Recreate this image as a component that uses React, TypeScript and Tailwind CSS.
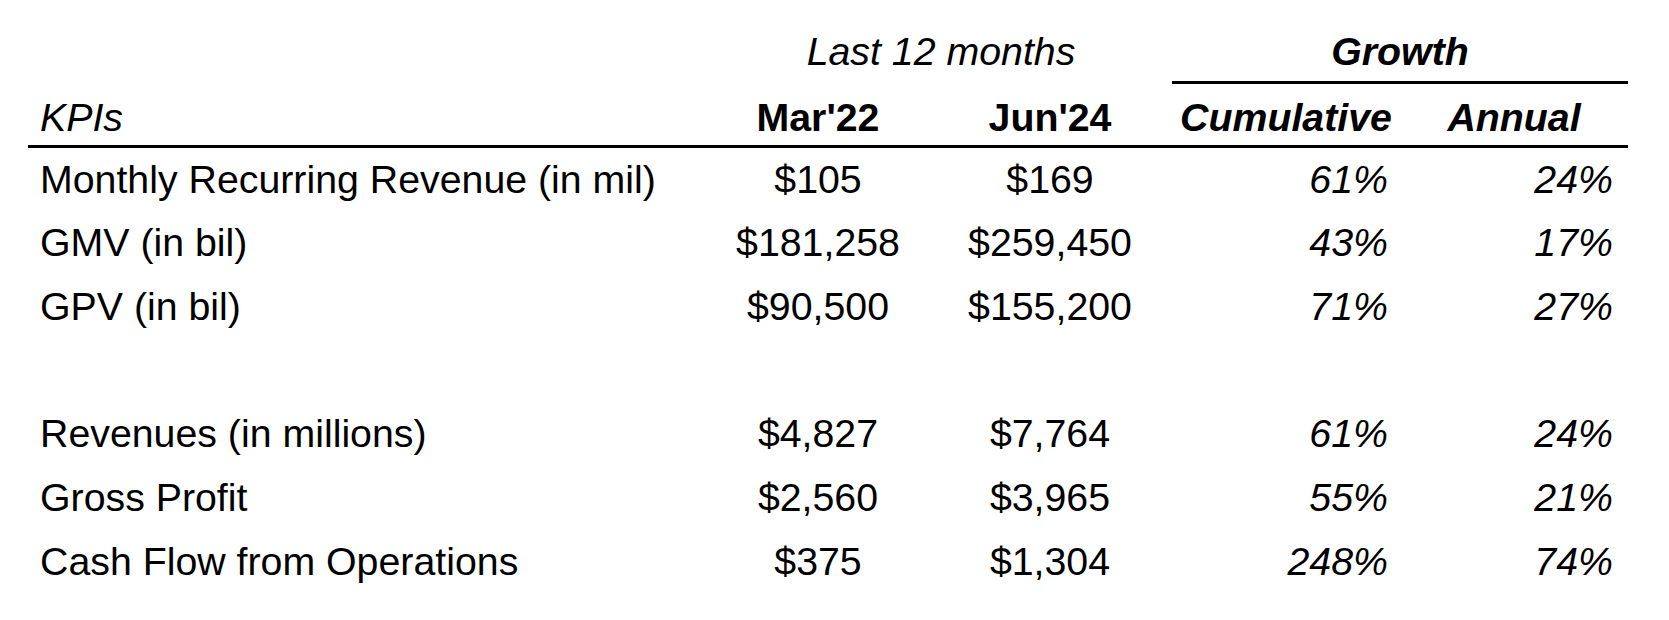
import React from "react";

const rows: ([string, string, string, string, string] | null)[] = [
  ["Monthly Recurring Revenue (in mil)", "$105", "$169", "61%", "24%"],
  ["GMV (in bil)", "$181,258", "$259,450", "43%", "17%"],
  ["GPV (in bil)", "$90,500", "$155,200", "71%", "27%"],
  null,
  ["Revenues (in millions)", "$4,827", "$7,764", "61%", "24%"],
  ["Gross Profit", "$2,560", "$3,965", "55%", "21%"],
  ["Cash Flow from Operations", "$375", "$1,304", "248%", "74%"],
];

const grid = "grid grid-cols-[674px_232px_232px_6px_228px_228px]";

export default function App() {
  return (
    <div
      className="w-[1669px] h-[620px] bg-white text-black pl-[28px] text-[39.3px] overflow-hidden"
      style={{ fontFamily: '"Liberation Sans", Arial, sans-serif' }}
    >
      <div className="w-[1600px]">
        {/* Top header row */}
        <div className={`${grid} h-[84px]`}>
          <div />
          <div className="col-span-2 text-center italic pt-[35px] leading-[32px] pl-[14px] whitespace-nowrap">
            Last 12 months
          </div>
          <div />
          <div className="col-span-2 text-center italic font-bold pt-[35px] leading-[32px] border-b-[3px] border-black">
            Growth
          </div>
        </div>
        {/* Column header row */}
        <div className={`${grid} h-[63.6px] border-b-[3px] border-black`}>
          <div className="italic pl-[12px] pt-[8.2px] leading-[51.9px]">KPIs</div>
          <div className="font-bold text-center pt-[8.2px] leading-[51.9px]">Mar'22</div>
          <div className="font-bold text-center pt-[8.2px] leading-[51.9px]">Jun'24</div>
          <div />
          <div className="font-bold italic text-center pt-[8.2px] leading-[51.9px] whitespace-nowrap">Cumulative</div>
          <div className="font-bold italic text-center pt-[8.2px] leading-[51.9px]">Annual</div>
        </div>
        {/* Data rows */}
        {rows.map((r, i) =>
          r ? (
            <div key={i} className={`${grid} h-[63.67px] leading-[63.67px]`}>
              <div className="pl-[12px] whitespace-nowrap">{r[0]}</div>
              <div className="text-center whitespace-nowrap">{r[1]}</div>
              <div className="text-center whitespace-nowrap">{r[2]}</div>
              <div />
              <div className="text-right italic pr-[12px]">{r[3]}</div>
              <div className="text-right italic pr-[15px]">{r[4]}</div>
            </div>
          ) : (
            <div key={i} className="h-[63.67px]" />
          )
        )}
      </div>
    </div>
  );
}
